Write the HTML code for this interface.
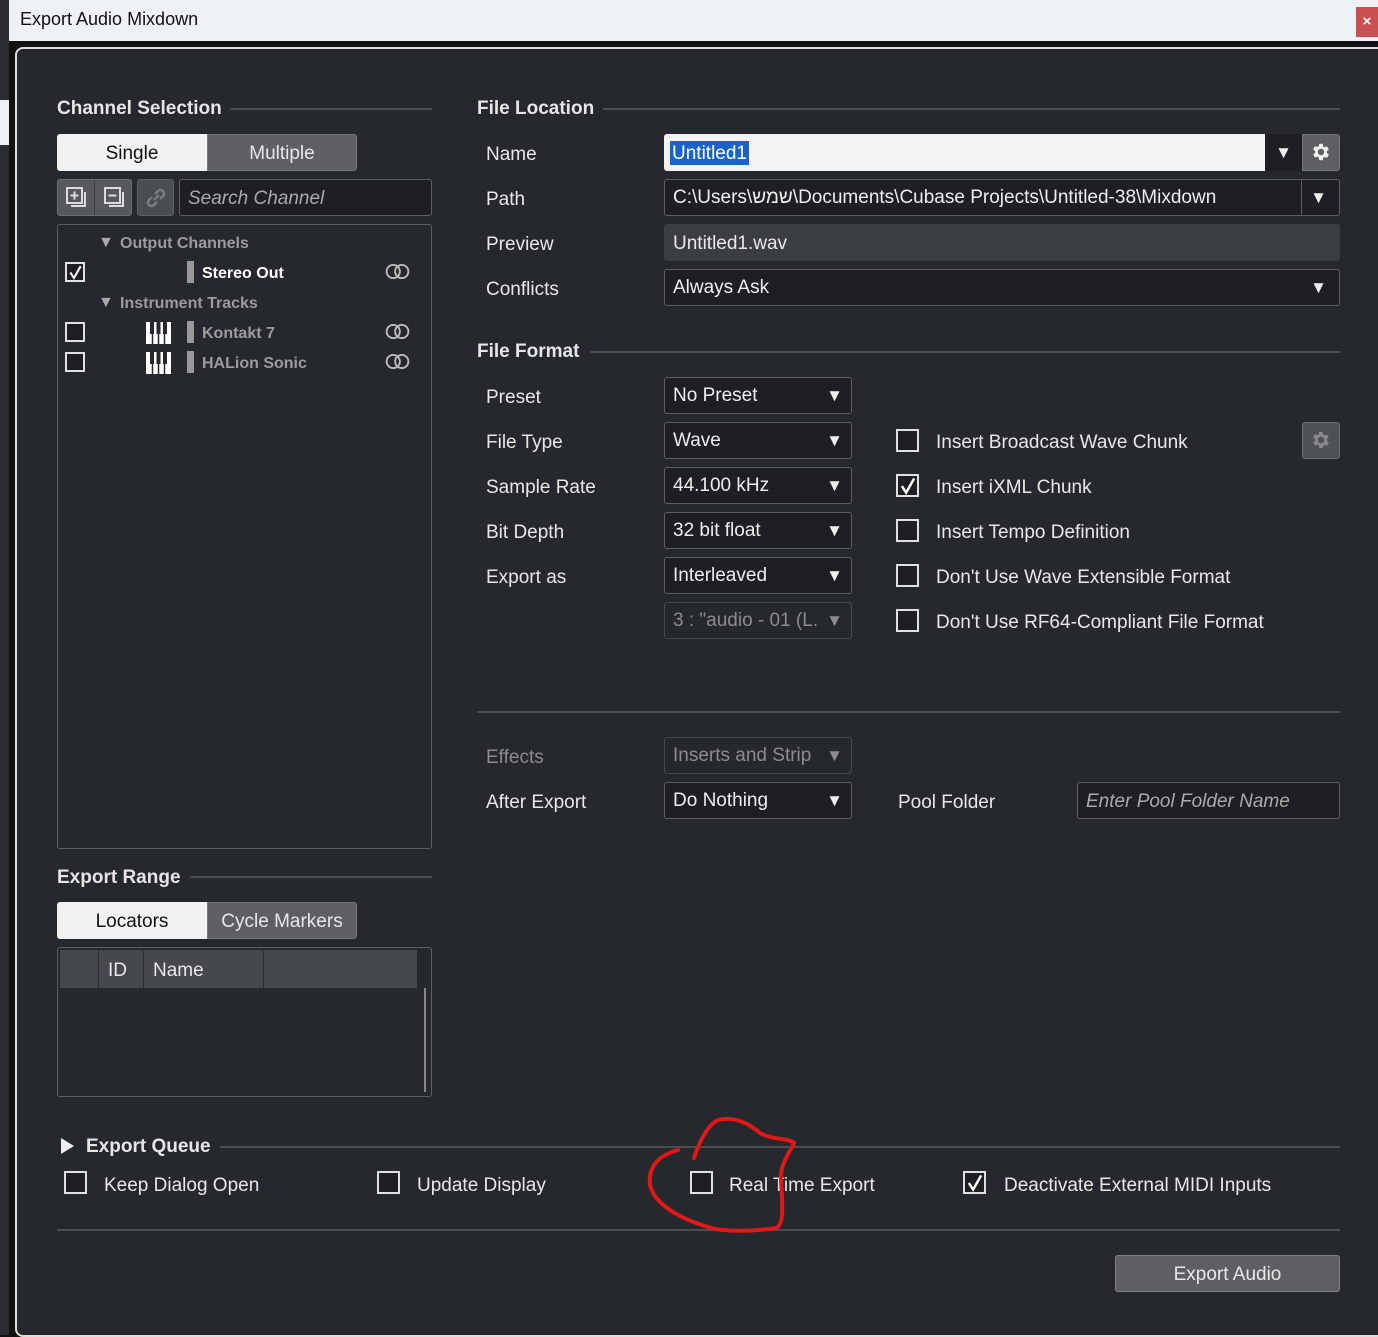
<!DOCTYPE html>
<html><head><meta charset="utf-8"><style>
*{box-sizing:border-box;margin:0;padding:0}
body{width:1378px;height:1335px;background:#111;position:relative;overflow:hidden;font-family:"Liberation Sans","Noto Sans CJK JP",sans-serif;color:#e8e8e8}
.a{position:absolute}
.t{font-size:19px;white-space:nowrap;margin-top:2px}
.h{font-size:19px;font-weight:bold;color:#e6e6e6;white-space:nowrap;margin-top:2px}
.line{position:absolute;height:2px;background:#4a4d51}
.dd{position:absolute;background:#1d1f22;border:1.5px solid #5b5e62;border-radius:3px;font-size:19px;padding-left:8px;line-height:36px;color:#eee;white-space:nowrap;overflow:hidden}
.dd .ar{position:absolute;right:8px;top:0;font-size:17px}
.cb{position:absolute;width:23px;height:23px;border:2px solid #e0e0e0;background:#1d1f22}
.cb svg{position:absolute;left:1px;top:1px}
.dim{color:#8a8c8f}
</style></head><body>
<div class="a" style="left:0;top:0;width:1378px;height:41px;background:#eef2f7"></div>
<div class="a" style="left:0;top:0;width:9px;height:1335px;background:#2a2c2f"></div>
<div class="a" style="left:0;top:100px;width:9px;height:45px;background:#eef2f7"></div>
<div class="a t" style="left:20px;top:7px;color:#111;font-size:18px">Export Audio Mixdown</div>
<div class="a" style="left:1356px;top:7px;width:22px;height:30px;background:#c85050;color:#fff;font-weight:bold;font-size:15px;text-align:center;line-height:30px">×</div>
<div class="a" style="left:15px;top:47px;width:1380px;height:1290px;background:#25282c;border:2px solid #ddd;border-radius:8px"></div>

<svg width="0" height="0" style="position:absolute"><defs><symbol id="ck" viewBox="0 0 19 19"><path d="M3 9.5l4.5 7L16 1.5" fill="none" stroke="#fff" stroke-width="2.6"/></symbol>
<symbol id="st" viewBox="0 0 26 18"><circle cx="8.5" cy="9" r="7" fill="none" stroke="#bbb" stroke-width="2"/><circle cx="17.5" cy="9" r="7" fill="none" stroke="#bbb" stroke-width="2"/></symbol></defs></svg>

<!-- Channel selection -->
<div class="a h" style="left:57px;top:96px">Channel Selection</div>
<div class="line" style="left:230px;top:108px;width:202px"></div>
<div class="a" style="left:57px;top:134px;width:150px;height:37px;background:#f2f2f2;border-radius:3px 0 0 3px;color:#111;font-size:19px;text-align:center;line-height:39px">Single</div>
<div class="a" style="left:207px;top:134px;width:150px;height:37px;background:#5d5f63;border:1px solid #777;border-radius:0 3px 3px 0;font-size:19px;text-align:center;line-height:37px">Multiple</div>
<div class="a" style="left:57px;top:179px;width:75px;height:37px;background:#56595d;border:1px solid #6b6e72;border-radius:3px"></div>
<div class="a" style="left:94px;top:180px;width:1px;height:35px;background:#3a3c40"></div>
<svg class="a" style="left:66px;top:187px" width="22" height="22"><rect x="1" y="1" width="15" height="15" fill="none" stroke="#ddd" stroke-width="2"/><path d="M5 19h14V5" fill="none" stroke="#ddd" stroke-width="2"/><path d="M8.5 4.5v8M4.5 8.5h8" stroke="#ddd" stroke-width="2"/></svg>
<svg class="a" style="left:104px;top:187px" width="22" height="22"><rect x="1" y="1" width="15" height="15" fill="none" stroke="#ddd" stroke-width="2"/><path d="M5 19h14V5" fill="none" stroke="#ddd" stroke-width="2"/><path d="M4.5 8.5h8" stroke="#ddd" stroke-width="2"/></svg>
<div class="a" style="left:137px;top:179px;width:37px;height:37px;background:#4a4d51;border:1px solid #5e6165;border-radius:3px"></div>
<svg class="a" style="left:143px;top:185px" width="26" height="26"><path d="M11 15l5-5M9 12l-3 3a3.5 3.5 0 005 5l3-3M17 14l3-3a3.5 3.5 0 00-5-5l-3 3" fill="none" stroke="#7a7d80" stroke-width="2.5"/></svg>
<div class="a" style="left:179px;top:179px;width:253px;height:37px;background:#1d1f22;border:1.5px solid #5b5e62;border-radius:3px;font-size:19px;font-style:italic;color:#aaa;padding-left:8px;line-height:37px">Search Channel</div>
<div class="a" style="left:57px;top:224px;width:375px;height:625px;border:1.5px solid #5b5e62;border-radius:3px"></div>
<div class="a" style="left:98px;top:234px;font-size:16px;color:#aaa">▼</div>
<div class="a" style="left:120px;top:235px;font-size:16px;font-weight:bold;color:#9a9c9f">Output Channels</div>
<div class="cb" style="left:65px;top:262px;width:20px;height:20px"><svg width="15" height="15"><use href="#ck"/></svg></div>
<div class="a" style="left:187px;top:261px;width:7px;height:22px;background:#999"></div>
<div class="a" style="left:202px;top:265px;font-size:16px;font-weight:bold;color:#fff">Stereo Out</div>
<svg class="a" style="left:385px;top:263px" width="25" height="17"><use href="#st"/></svg>
<div class="a" style="left:98px;top:294px;font-size:16px;color:#aaa">▼</div>
<div class="a" style="left:120px;top:295px;font-size:16px;font-weight:bold;color:#9a9c9f">Instrument Tracks</div>
<div class="cb" style="left:65px;top:322px;width:20px;height:20px"></div>
<div class="cb" style="left:65px;top:352px;width:20px;height:20px"></div>
<svg class="a" style="left:146px;top:322px" width="25" height="22"><rect width="25" height="22" fill="#fff"/><path d="M6.5 0v22M12.5 0v22M18.5 0v22" stroke="#25282c" stroke-width="1.5"/><rect x="4" y="0" width="4" height="12" fill="#25282c"/><rect x="10.5" y="0" width="4" height="12" fill="#25282c"/><rect x="17" y="0" width="4" height="12" fill="#25282c"/></svg>
<svg class="a" style="left:146px;top:352px" width="25" height="22"><rect width="25" height="22" fill="#fff"/><path d="M6.5 0v22M12.5 0v22M18.5 0v22" stroke="#25282c" stroke-width="1.5"/><rect x="4" y="0" width="4" height="12" fill="#25282c"/><rect x="10.5" y="0" width="4" height="12" fill="#25282c"/><rect x="17" y="0" width="4" height="12" fill="#25282c"/></svg>
<div class="a" style="left:187px;top:321px;width:7px;height:22px;background:#999"></div>
<div class="a" style="left:187px;top:351px;width:7px;height:22px;background:#999"></div>
<div class="a" style="left:202px;top:325px;font-size:16px;font-weight:bold;color:#9a9c9f">Kontakt 7</div>
<div class="a" style="left:202px;top:355px;font-size:16px;font-weight:bold;color:#9a9c9f">HALion Sonic</div>
<svg class="a" style="left:385px;top:323px" width="25" height="17"><use href="#st"/></svg>
<svg class="a" style="left:385px;top:353px" width="25" height="17"><use href="#st"/></svg>

<!-- Export range -->
<div class="a h" style="left:57px;top:865px">Export Range</div>
<div class="line" style="left:190px;top:876px;width:242px"></div>
<div class="a" style="left:57px;top:902px;width:150px;height:37px;background:#f2f2f2;border-radius:3px 0 0 3px;color:#111;font-size:19px;text-align:center;line-height:39px">Locators</div>
<div class="a" style="left:207px;top:902px;width:150px;height:37px;background:#5d5f63;border:1px solid #777;border-radius:0 3px 3px 0;font-size:19px;text-align:center;line-height:37px">Cycle Markers</div>
<div class="a" style="left:57px;top:947px;width:375px;height:150px;border:1.5px solid #5b5e62;border-radius:3px"></div>
<div class="a" style="left:60px;top:950px;width:357px;height:38px;background:#45484c"></div>
<div class="a" style="left:98px;top:950px;width:1px;height:38px;background:#2b2d30"></div>
<div class="a" style="left:143px;top:950px;width:1px;height:38px;background:#2b2d30"></div>
<div class="a" style="left:263px;top:950px;width:1px;height:38px;background:#2b2d30"></div>
<div class="a t" style="left:108px;top:958px">ID</div>
<div class="a t" style="left:153px;top:958px">Name</div>
<div class="a" style="left:424px;top:988px;width:2px;height:104px;background:#888"></div>

<!-- File location -->
<div class="a h" style="left:477px;top:96px">File Location</div>
<div class="line" style="left:603px;top:108px;width:737px"></div>
<div class="a t" style="left:486px;top:142px">Name</div>
<div class="a t" style="left:486px;top:187px">Path</div>
<div class="a t" style="left:486px;top:232px">Preview</div>
<div class="a t" style="left:486px;top:277px">Conflicts</div>
<div class="a" style="left:664px;top:134px;width:602px;height:37px;background:#f3f3f3;border-radius:3px 0 0 3px"></div>
<div class="a" style="left:670px;top:141px;height:24px;background:#1b63c8;color:#fff;font-size:19px;padding:0 2px;line-height:25px">Untitled1</div>
<div class="a" style="left:1265px;top:134px;width:37px;height:37px;background:#1d1f22;color:#eee;font-size:17px;text-align:center;line-height:37px">▼</div>
<div class="a" style="left:1302px;top:134px;width:38px;height:37px;background:#5d5f63;border:1px solid #777;border-radius:0 3px 3px 0"></div>
<svg class="a" style="left:1310px;top:141px" width="22" height="22" viewBox="0 0 24 24"><path fill="#eee" d="M19.4 13a7.5 7.5 0 000-2l2.1-1.6-2-3.5-2.5 1a7 7 0 00-1.7-1L15 3h-4l-.4 2.6a7 7 0 00-1.7 1l-2.5-1-2 3.5L6.6 11a7.5 7.5 0 000 2l-2.1 1.6 2 3.5 2.5-1a7 7 0 001.7 1L11 21h4l.4-2.6a7 7 0 001.7-1l2.5 1 2-3.5zM13 15.5a3.5 3.5 0 110-7 3.5 3.5 0 010 7z" transform="translate(-1 0)"/></svg>
<div class="dd" style="left:664px;top:179px;width:676px;height:37px">C:\Users\שמש\Documents\Cubase Projects\Untitled-38\Mixdown<span style="position:absolute;left:636px;top:0;width:1px;height:36px;background:#5b5e62"></span><span class="ar" style="right:12px">▼</span></div>
<div class="a" style="left:664px;top:224px;width:676px;height:37px;background:#3a3d41;border-radius:3px;font-size:19px;padding-left:9px;line-height:39px">Untitled1.wav</div>
<div class="dd" style="left:664px;top:269px;width:676px;height:37px">Always Ask<span class="ar" style="right:12px">▼</span></div>

<!-- File format -->
<div class="a h" style="left:477px;top:339px">File Format</div>
<div class="line" style="left:590px;top:351px;width:750px"></div>
<div class="a t" style="left:486px;top:385px">Preset</div>
<div class="a t" style="left:486px;top:430px">File Type</div>
<div class="a t" style="left:486px;top:475px">Sample Rate</div>
<div class="a t" style="left:486px;top:520px">Bit Depth</div>
<div class="a t" style="left:486px;top:565px">Export as</div>
<div class="dd" style="left:664px;top:377px;width:188px;height:37px">No Preset<span class="ar">▼</span></div>
<div class="dd" style="left:664px;top:422px;width:188px;height:37px">Wave<span class="ar">▼</span></div>
<div class="dd" style="left:664px;top:467px;width:188px;height:37px">44.100 kHz<span class="ar">▼</span></div>
<div class="dd" style="left:664px;top:512px;width:188px;height:37px">32 bit float<span class="ar">▼</span></div>
<div class="dd" style="left:664px;top:557px;width:188px;height:37px">Interleaved<span class="ar">▼</span></div>
<div class="dd" style="left:664px;top:602px;width:188px;height:37px;background:#25282c;border-color:#45484c;color:#8a8c8f">3 : "audio - 01 (L.<span class="ar" style="background:#25282c">▼</span></div>
<div class="cb" style="left:896px;top:429px"></div>
<div class="cb" style="left:896px;top:474px"><svg width="18" height="18"><use href="#ck"/></svg></div>
<div class="cb" style="left:896px;top:519px"></div>
<div class="cb" style="left:896px;top:564px"></div>
<div class="cb" style="left:896px;top:609px"></div>
<div class="a t" style="left:936px;top:430px">Insert Broadcast Wave Chunk</div>
<div class="a t" style="left:936px;top:475px">Insert iXML Chunk</div>
<div class="a t" style="left:936px;top:520px">Insert Tempo Definition</div>
<div class="a t" style="left:936px;top:565px">Don't Use Wave Extensible Format</div>
<div class="a t" style="left:936px;top:610px">Don't Use RF64-Compliant File Format</div>
<div class="a" style="left:1302px;top:422px;width:38px;height:37px;background:#4e5155;border:1px solid #6b6e72;border-radius:3px"></div>
<svg class="a" style="left:1310px;top:429px" width="22" height="22" viewBox="0 0 24 24"><path fill="#888" d="M19.4 13a7.5 7.5 0 000-2l2.1-1.6-2-3.5-2.5 1a7 7 0 00-1.7-1L15 3h-4l-.4 2.6a7 7 0 00-1.7 1l-2.5-1-2 3.5L6.6 11a7.5 7.5 0 000 2l-2.1 1.6 2 3.5 2.5-1a7 7 0 001.7 1L11 21h4l.4-2.6a7 7 0 001.7-1l2.5 1 2-3.5zM13 15.5a3.5 3.5 0 110-7 3.5 3.5 0 010 7z" transform="translate(-1 0)"/></svg>

<div class="line" style="left:477px;top:711px;width:863px"></div>
<div class="a t dim" style="left:486px;top:745px">Effects</div>
<div class="a t" style="left:486px;top:790px">After Export</div>
<div class="dd" style="left:664px;top:737px;width:188px;height:37px;background:#25282c;border-color:#45484c;color:#8a8c8f">Inserts and Strip<span class="ar" style="background:#25282c">▼</span></div>
<div class="dd" style="left:664px;top:782px;width:188px;height:37px">Do Nothing<span class="ar">▼</span></div>
<div class="a t" style="left:898px;top:790px">Pool Folder</div>
<div class="a" style="left:1077px;top:782px;width:263px;height:37px;background:#1d1f22;border:1.5px solid #5b5e62;border-radius:3px;font-size:19px;font-style:italic;color:#aaa;padding-left:8px;line-height:37px">Enter Pool Folder Name</div>

<!-- Export queue -->
<svg class="a" style="left:61px;top:1138px" width="14" height="16"><path d="M0 0L13 8L0 16Z" fill="#eee"/></svg>
<div class="a h" style="left:86px;top:1134px">Export Queue</div>
<div class="line" style="left:220px;top:1146px;width:1120px"></div>
<div class="cb" style="left:64px;top:1171px"></div>
<div class="cb" style="left:377px;top:1171px"></div>
<div class="cb" style="left:690px;top:1171px"></div>
<div class="cb" style="left:963px;top:1171px"><svg width="18" height="18"><use href="#ck"/></svg></div>
<div class="a t" style="left:104px;top:1173px">Keep Dialog Open</div>
<div class="a t" style="left:417px;top:1173px">Update Display</div>
<div class="a t" style="left:729px;top:1173px">Real Time Export</div>
<div class="a t" style="left:1004px;top:1173px">Deactivate External MIDI Inputs</div>
<div class="line" style="left:57px;top:1229px;width:1283px"></div>
<div class="a" style="left:1115px;top:1255px;width:225px;height:37px;background:#5d5f63;border:1px solid #808286;border-radius:3px;font-size:19px;text-align:center;line-height:37px">Export Audio</div>

<svg class="a" style="left:0;top:0" width="1378" height="1335"><path d="M694 1158 C700 1140 708 1125 718 1120 C735 1116 750 1124 760 1133 C772 1140 790 1138 794 1143 C788 1155 780 1165 781 1180 C782 1200 785 1225 776 1228 C750 1232 720 1232 705 1226 C680 1218 655 1205 650 1185 C648 1165 660 1155 678 1150" fill="none" stroke="#e01818" stroke-width="4" stroke-linecap="round"/></svg>
</body></html>
